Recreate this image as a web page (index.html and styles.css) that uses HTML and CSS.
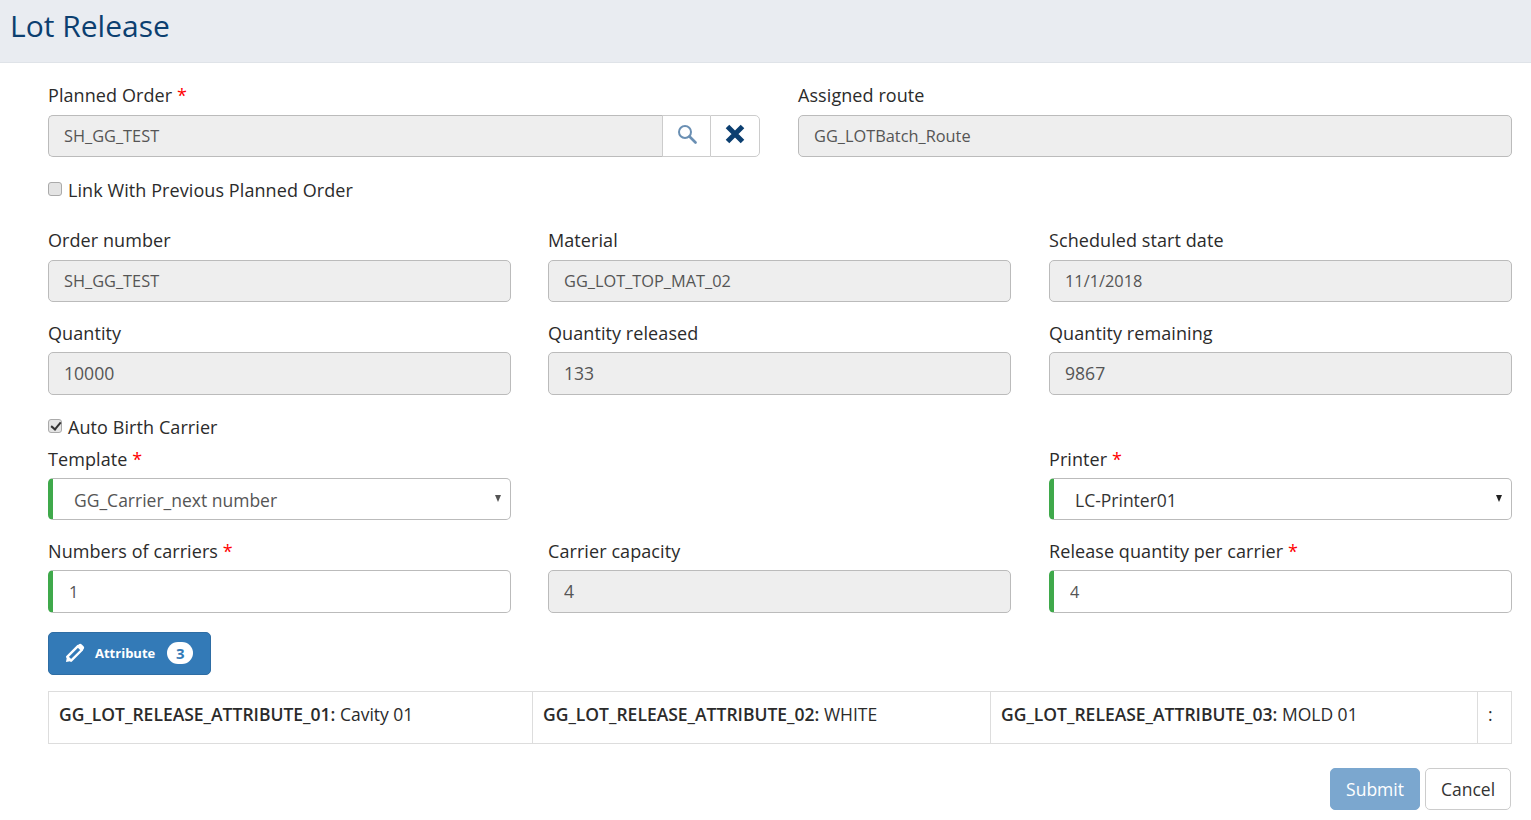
FILE: index.html
```html
<!DOCTYPE html>
<html lang="en">
<head>
    <meta charset="UTF-8">
    <title>Lot Release</title>
    <link rel="stylesheet" href="styles.css">
</head>
<body>
    <header class="page-header">
        <h1>Lot Release</h1>
    </header>
    <form class="lot-form">
        <div class="row row-2 row-top">
            <div class="field">
                <label class="field-label">Planned Order <span class="req">*</span></label>
                <div class="input-group">
                    <input class="control" type="text" value="SH_GG_TEST" disabled>
                    <button class="addon" type="button" aria-label="Search">
                        <svg width="20" height="20" viewBox="0 0 20 20"><circle cx="8" cy="8" r="6" fill="none" stroke="#6a8fb3" stroke-width="2"/><path d="M12.500 12.500l6 6" stroke="#6a8fb3" stroke-width="2.600" stroke-linecap="round"/></svg>
                    </button>
                    <button class="addon" type="button" aria-label="Clear">
                        <svg width="20" height="20" viewBox="0 0 20 20"><path d="M2.500 2.500l15 15M17.500 2.500l-15 15" stroke="#0c3f70" stroke-width="5"/></svg>
                    </button>
                </div>
            </div>
            <div class="field">
                <label class="field-label">Assigned route</label>
                <input class="control" type="text" value="GG_LOTBatch_Route" disabled>
            </div>
        </div>

        <label class="check check-link"><input type="checkbox"> Link With Previous Planned Order</label>

        <div class="row row-3 row-order">
            <div class="field">
                <label class="field-label">Order number</label>
                <input class="control" type="text" value="SH_GG_TEST" disabled>
            </div>
            <div class="field">
                <label class="field-label">Material</label>
                <input class="control" type="text" value="GG_LOT_TOP_MAT_02" disabled>
            </div>
            <div class="field">
                <label class="field-label">Scheduled start date</label>
                <input class="control" type="text" value="11/1/2018" disabled>
            </div>
        </div>

        <div class="row row-3 row-qty">
            <div class="field">
                <label class="field-label">Quantity</label>
                <input class="control control-num" type="text" value="10000" disabled>
            </div>
            <div class="field">
                <label class="field-label">Quantity released</label>
                <input class="control control-num" type="text" value="133" disabled>
            </div>
            <div class="field">
                <label class="field-label">Quantity remaining</label>
                <input class="control control-num" type="text" value="9867" disabled>
            </div>
        </div>

        <label class="check check-auto"><input type="checkbox" checked> Auto Birth Carrier</label>

        <div class="row row-3 row-template">
            <div class="field">
                <label class="field-label">Template <span class="req">*</span></label>
                <div class="select-box"><span>GG_Carrier_next number</span></div>
            </div>
            <div class="field"></div>
            <div class="field">
                <label class="field-label">Printer <span class="req">*</span></label>
                <div class="select-box select-dark"><span>LC-Printer01</span></div>
            </div>
        </div>

        <div class="row row-3 row-carriers">
            <div class="field">
                <label class="field-label">Numbers of carriers <span class="req">*</span></label>
                <input class="control control-req" type="text" value="1">
            </div>
            <div class="field">
                <label class="field-label">Carrier capacity</label>
                <input class="control control-num" type="text" value="4" disabled>
            </div>
            <div class="field">
                <label class="field-label">Release quantity per carrier <span class="req">*</span></label>
                <input class="control control-req" type="text" value="4">
            </div>
        </div>

        <button class="btn-attr" type="button">
            <svg width="20" height="20" viewBox="0 0 20 20"><path d="M2.200 13.800L12.900 3.100l3.900 3.900L6.100 17.700z" fill="none" stroke="#fff" stroke-width="2.400" stroke-linejoin="round"/><path d="M1 19l1-5.500 4.500 4.500zM13.600 1.600c1-1 2.200-1 3.100-.1l1.800 1.800c.9.900.9 2.100-.1 3.100l-1.600 1.500-4.800-4.800z" fill="#fff"/></svg>
            <span>Attribute</span>
            <span class="badge">3</span>
        </button>

        <div class="attr-table">
            <div class="attr-cell attr-1"><b>GG_LOT_RELEASE_ATTRIBUTE_01:</b> Cavity 01</div>
            <div class="attr-cell attr-2"><b>GG_LOT_RELEASE_ATTRIBUTE_02:</b> WHITE</div>
            <div class="attr-cell attr-3"><b>GG_LOT_RELEASE_ATTRIBUTE_03:</b> MOLD 01</div>
            <div class="attr-cell attr-4"><b>:</b></div>
        </div>

        <div class="actions">
            <button class="btn btn-submit" type="button">Submit</button>
            <button class="btn btn-cancel" type="button">Cancel</button>
        </div>
    </form>
</body>
</html>
```

FILE: styles.css
```css
body {
    font-family: "Open Sans", sans-serif;
    font-size: 18px;
    letter-spacing: 0.08px;
    color: #2b2b2b;
    background-color: #fff;
    margin: 0;
}

.page-header {
    height: 62px;
    background-color: #e9ecf1;
    border-bottom: 1px solid #dfe3e8;
    padding-left: 10px;
}

h1 {
    margin: 0;
    font-size: 30px;
    font-weight: 400;
    letter-spacing: 0;
    line-height: 52px;
    color: #0c3f70;
}

.lot-form {
    padding: 0 19px 0 48px;
}

.row {
    display: grid;
    column-gap: 37px;
}

.row-2 {
    grid-template-columns: 712px 1fr;
    column-gap: 38px;
}

.row-3 {
    grid-template-columns: 463px 463px 1fr;
}

.row-3 .field:last-child {
    margin-left: 1px;
}

.row-top {
    padding-top: 20px;
}

.row-order {
    margin-top: 25px;
}

.row-order .field-label {
    height: 32px;
}

.row-qty {
    margin-top: 19px;
}

.row-carriers {
    margin-top: 19px;
}

.field-label {
    display: block;
    height: 31px;
    line-height: 25px;
}

.row-top .field-label {
    height: 32px;
}

.req {
    color: #f00;
}

.control {
    display: block;
    width: 100%;
    height: 42px;
    box-sizing: border-box;
    padding: 0 15px;
    border: 1px solid #bbb;
    border-radius: 5px;
    background-color: #eee;
    font-family: inherit;
    font-size: 16.350px;
    letter-spacing: 0;
    color: #555;
    opacity: 1;
}

.control-num {
    height: 43px;
    padding-bottom: 2px;
    font-size: 17.600px;
}

.control-req {
    height: 43px;
    padding-left: 16px;
    background-color: #fff;
    border-left: 5px solid #3fa94b;
    font-size: 16.350px;
}

.input-group {
    display: flex;
}

.input-group .control {
    flex: 1;
    border-radius: 5px 0 0 5px;
    border-right: 0;
}

.addon {
    width: 48px;
    height: 42px;
    padding: 0 0 4px;
    display: flex;
    align-items: center;
    justify-content: center;
    background-color: #fff;
    border: 1px solid #ccc;
    border-right: 0;
}

.addon:last-child {
    width: 50px;
    border-right: 1px solid #ccc;
    border-radius: 0 5px 5px 0;
}

.check {
    display: flex;
    align-items: center;
    line-height: 25px;
}

.check input {
    appearance: none;
    position: relative;
    width: 14px;
    height: 14px;
    margin: 0 6px 4px 0;
    background-color: #e4e4e4;
    border: 1px solid #aaa;
    border-radius: 3px;
}

.check input:checked::after {
    content: "";
    position: absolute;
    left: 3.500px;
    top: 0.500px;
    width: 4px;
    height: 8px;
    border: solid #333;
    border-width: 0 2.500px 2.500px 0;
    transform: rotate(40deg);
}

.check-link {
    margin-top: 21px;
}

.check-auto {
    margin-top: 20px;
}

.row-template {
    margin-top: 7px;
}

.select-box {
    height: 42px;
    box-sizing: border-box;
    padding-left: 21px;
    line-height: 42px;
    border: 1px solid #bbb;
    border-left: 5px solid #3fa94b;
    border-radius: 5px;
    font-size: 17.500px;
    letter-spacing: 0;
    color: #555;
    position: relative;
}

.select-box::after {
    content: "";
    position: absolute;
    right: 9px;
    top: 16px;
    border-left: 3.500px solid transparent;
    border-right: 3.500px solid transparent;
    border-top: 7px solid #555;
}

.select-dark {
    color: #333;
}

.select-dark::after {
    border-top-color: #222;
}

.btn-attr {
    display: flex;
    align-items: center;
    width: 163px;
    height: 43px;
    margin-top: 19px;
    padding: 0 0 2px 16px;
    background-color: #337ab7;
    border: 1px solid #2e6da4;
    border-radius: 5px;
    color: #fff;
    font-family: inherit;
    font-size: 13px;
    font-weight: 700;
    letter-spacing: 0;
}

.btn-attr svg {
    margin-right: 10px;
}

.badge {
    width: 26px;
    height: 22px;
    margin-left: 12px;
    border-radius: 11px;
    background-color: #fff;
    color: #337ab7;
    font-size: 15px;
    line-height: 22px;
}

.attr-table {
    display: grid;
    grid-template-columns: 484px 458px 487px 1fr;
    margin-top: 16px;
    height: 53px;
    box-sizing: border-box;
    border: 1px solid #ddd;
    font-size: 17.500px;
    letter-spacing: 0;
}

.attr-cell {
    padding-left: 10px;
    line-height: 45px;
    border-right: 1px solid #ddd;
    white-space: nowrap;
}

.attr-cell:last-child {
    border-right: 0;
}

.attr-cell b {
    font-weight: 600;
}

.attr-4 b {
    font-weight: 400;
}

.actions {
    display: flex;
    justify-content: flex-end;
    gap: 5px;
    margin-top: 24px;
    padding-right: 1px;
}

.btn {
    height: 42px;
    border-radius: 5px;
    font-family: inherit;
    font-size: 17.500px;
    letter-spacing: 0;
}

.btn-submit {
    width: 90px;
    background-color: #7ba7cf;
    border: 1px solid #7ba7cf;
    color: #fff;
}

.btn-cancel {
    width: 86px;
    background-color: #fff;
    border: 1px solid #ccc;
    color: #333;
}
```
